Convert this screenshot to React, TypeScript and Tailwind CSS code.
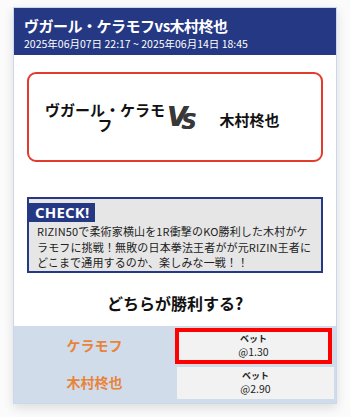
import React from 'react';

const font = "font-['Noto_Sans_CJK_JP',sans-serif]";

const odds = [
  { name: 'ケラモフ', rate: '@1.30', selected: true },
  { name: '木村柊也', rate: '@2.90', selected: false },
];

const VsMark: React.FC = () => (
  <div className="flex items-end text-[#383838] italic font-black leading-none select-none font-['DejaVu_Sans',sans-serif]">
    <span className="text-[26px] tracking-[-6px] [text-shadow:0.6px_0_0_#383838]">V</span>
    <span className="text-[21px] -mb-[3px] [text-shadow:0.6px_0_0_#383838]">S</span>
  </div>
);

const App: React.FC = () => {
  return (
    <div className={`w-[350px] h-[417px] bg-[#fbfbfb] pt-[7px] pl-[13px] ${font}`}>
      <div className="w-[324px] border border-[#c9d8f1] bg-white shadow-[0_4px_10px_rgba(0,0,0,0.12)]">
        <div className="bg-[#253884] h-[47px] px-[10px] pt-[7px] text-white">
          <div className="text-[15px] font-bold leading-[21px] tracking-[-0.5px]">ヴガール・ケラモフvs木村柊也</div>
          <div className="text-[10.5px] leading-[15px]">2025年06月07日 22:17 ~ 2025年06月14日 18:45</div>
        </div>

        <div className="px-[13px] pt-[17px]">
          <div className="h-[90px] border-2 border-[#e33b2c] rounded-[9px] flex items-center">
            <div className="w-[138px] pl-[16px] pr-[2px] text-center text-[15px] font-bold leading-[15px] text-[#111]">
              ヴガール・ケラモフ
            </div>
            <VsMark />
            <div className="flex-1 text-center text-[15px] font-bold text-[#111] pr-[18px] pt-[6px]">木村柊也</div>
          </div>

          <div className="mt-[35px] h-[76px] border-2 border-[#253884] bg-[#e6e6e6]">
            <div className="inline-block bg-[#253884] text-white font-bold text-[15px] leading-[18px] px-[6px] pb-[1px] font-['Open_Sans',sans-serif] tracking-[0.2px]">
              CHECK!
            </div>
            <p className="pl-[8px] pr-[6px] pt-[1px] text-[11px] leading-[15.5px] tracking-[0.15px] text-[#222]">
              RIZIN50で柔術家横山を1R衝撃のKO勝利した木村がケラモフに挑戦！無敗の日本拳法王者がが元RIZIN王者にどこまで通用するのか、楽しみな一戦！！
            </p>
          </div>

          <div className="h-[53px] pt-[6px] flex items-center justify-center text-[16px] font-bold text-[#111]">
            どちらが勝利する?
          </div>
        </div>

        <div className="bg-[#d1dcea] pt-[1px] pb-[2px]">
          {odds.map((o) => (
            <div key={o.name} className="flex items-center h-[37px]">
              <div className="w-[161px] text-center text-[14px] font-bold text-[#e8843a]">{o.name}</div>
              <div className="flex-1 pr-[4px]">
                <button
                  className={`w-full flex flex-col items-center justify-center bg-[#f2f2f2] text-[#222] ${
                    o.selected ? 'h-[36px] border-4 border-[#ff0000]' : 'h-[32px] mx-[2px] w-[153px]'
                  }`}
                >
                  <span className="text-[9px] font-bold leading-[12px]">ベット</span>
                  <span className="text-[10.5px] leading-[13px]">{o.rate}</span>
                </button>
              </div>
            </div>
          ))}
        </div>
      </div>
    </div>
  );
};

export default App;
